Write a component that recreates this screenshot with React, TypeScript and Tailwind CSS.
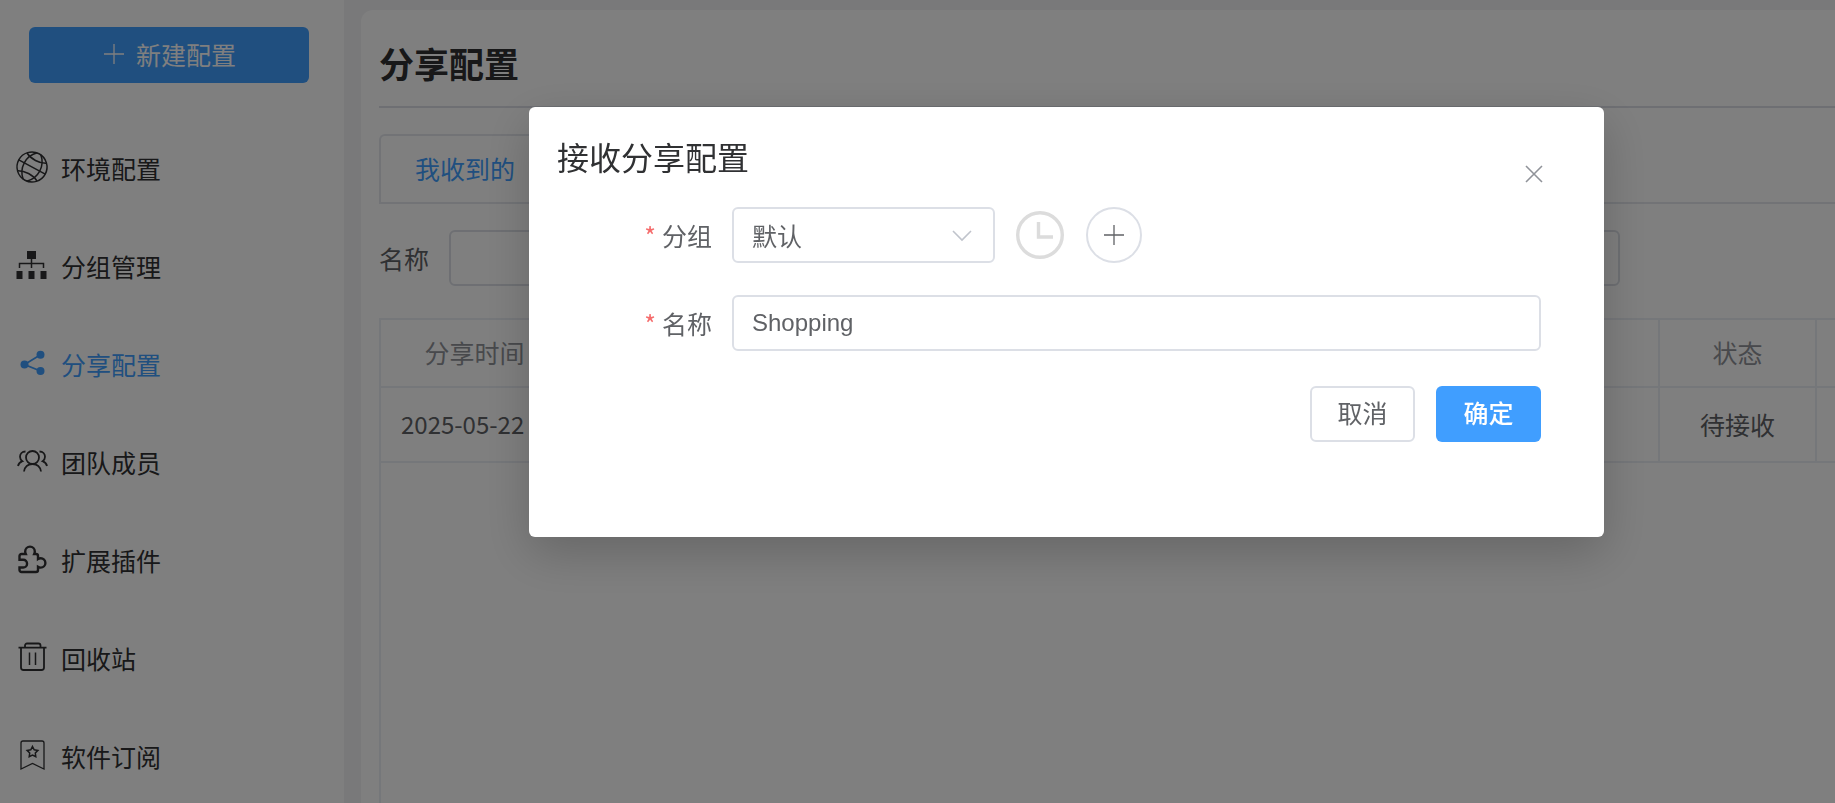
import type { ReactNode } from 'react';

interface MenuItem {
    label: string;
    icon: ReactNode;
    active?: boolean;
}

const menuItems: MenuItem[] = [
    {
        label: '环境配置',
        icon: (
            <g transform="rotate(28 16 15)" strokeWidth="1.5">
                <circle cx="16" cy="15" r="15" />
                <path d="M1 15h30M5 5c6 3.500 16 3.500 22 0M5 25c6-3.500 16-3.500 22 0" />
                <path d="M14 0c-9 8-9 22 0 30M18 0c9 8 9 22 0 30" />
            </g>
        ),
    },
    {
        label: '分组管理',
        icon: (
            <>
                <path d="M11 1h9v8h-9zM.5 21h6v8h-6zM12.500 21h6v8h-6zM24.500 21h6v8h-6z" fill="currentColor" stroke="none" />
                <path d="M15.500 9v9M3.500 18v-4.500h24V18" strokeWidth="1.5" />
            </>
        ),
    },
    {
        label: '分享配置',
        active: true,
        icon: (
            <>
                <path d="M24.500 6.700l-16 9.800 16 6.500" />
                <g fill="currentColor" stroke="none">
                    <circle cx="8.500" cy="16.500" r="4" />
                    <circle cx="24.500" cy="6.700" r="4" />
                    <circle cx="24.500" cy="23" r="4" />
                </g>
            </>
        ),
    },
    {
        label: '团队成员',
        icon: (
            <>
                <circle cx="16.500" cy="11.500" r="6.500" />
                <path d="M8 25.500c.6-4.600 4-7.500 8.500-7.500s7.900 2.900 8.500 7.500" />
                <path d="M9.500 5.500C6 5.500 4 8 4 10.800c0 1.900.9 3.400 2.400 4.400C4 16.200 2.400 18 2 20" />
                <path d="M23.500 5.500c3.500 0 5.500 2.500 5.500 5.300 0 1.900-.9 3.400-2.400 4.400 2.400 1 4 2.800 4.400 4.800" />
            </>
        ),
    },
    {
        label: '扩展插件',
        icon: (
            <path
                strokeWidth="2.4"
                d="M3.500 15.800V12a2 2 0 0 1 2-2h4.300c-.4-.9-.6-1.700-.6-2.600a4.800 4.800 0 0 1 9.600 0c0 .9-.2 1.700-.6 2.600H20a2 2 0 0 1 2 2v3c.8-.5 1.700-.8 2.700-.8a4.700 4.700 0 0 1 0 9.400c-1 0-1.900-.3-2.700-.8V26a2 2 0 0 1-2 2H5.500a2 2 0 0 1-2-2v-2.500h3.700a3.850 3.850 0 0 0 0-7.700z"
            />
        ),
    },
    {
        label: '回收站',
        icon: (
            <>
                <path d="M2.500 5.700h28M9 5.500V3.500a2 2 0 0 1 2-2h11.500a2 2 0 0 1 2 2v2M5 6v19.500a2.500 2.500 0 0 0 2.500 2.500h18a2.500 2.500 0 0 0 2.500-2.500V6" />
                <path d="M13.500 10.500v12.500M19.500 10.500v12.500" strokeWidth="1.5" />
            </>
        ),
    },
    {
        label: '软件订阅',
        icon: (
            <>
                <path strokeWidth="1.3" d="M5 29V3a2 2 0 0 1 2-2h19a2 2 0 0 1 2 2v26l-11.500-5.500z" />
                <path
                    strokeWidth="1.5"
                    d="M16.500 6.500l1.700 3.300 3.700.6-2.600 2.600.5 3.700-3.300-1.600-3.300 1.600.5-3.700-2.600-2.600 3.700-.6z"
                />
            </>
        ),
    },
];

function MenuIcon({ children }: { children: ReactNode }) {
    return (
        <svg viewBox="0 0 32 32" className="size-8 shrink-0 overflow-visible" fill="none" stroke="currentColor" strokeWidth="1.8">
            {children}
        </svg>
    );
}

function PlusIcon() {
    return (
        <svg viewBox="0 0 20 20" className="size-5" fill="none" stroke="currentColor" strokeWidth="1.3" aria-hidden="true">
            <path d="M10 0v20M0 10h20" />
        </svg>
    );
}

function Sidebar() {
    return (
        <aside className="w-[344px] shrink-0 bg-white pt-[27px]">
            <div className="pr-[35px] pl-[29px]">
                <button className="flex h-14 w-full items-center justify-center gap-3 rounded-md bg-[#409eff] pb-0.5 pl-0.5 text-white">
                    <PlusIcon />
                    新建配置
                </button>
            </div>
            <nav className="mt-9">
                {menuItems.map((item) => (
                    <a
                        key={item.label}
                        href="#"
                        className={`flex h-[98px] items-center gap-[13px] pl-4 ${item.active ? 'text-[#409eff]' : 'text-[#303133]'}`}
                    >
                        <MenuIcon>{item.icon}</MenuIcon>
                        {item.label}
                    </a>
                ))}
            </nav>
        </aside>
    );
}

function ShareTable() {
    return (
        <div className="mt-8 flex-1 border-t-2 border-l-2 border-[#ebeef5]">
            <table className="w-full table-fixed border-collapse text-center">
                <thead className="text-[#909399]">
                    <tr className="h-[67px] border-b-2 border-[#ebeef5]">
                        <th className="w-[188px] border-r-2 border-[#ebeef5] pb-0.5 font-normal">分享时间</th>
                        <th className="border-r-2 border-[#ebeef5]"></th>
                        <th className="w-[157px] border-r-2 border-[#ebeef5] pb-0.5 font-normal">状态</th>
                        <th className="w-[19px]"></th>
                    </tr>
                </thead>
                <tbody className="text-[#606266]">
                    <tr className="h-[75px] border-b-2 border-[#ebeef5]">
                        <td className="overflow-hidden border-r-2 border-[#ebeef5] pb-0.5 pl-5 text-left text-[24px] whitespace-nowrap">
                            2025-05-22
                        </td>
                        <td className="border-r-2 border-[#ebeef5]"></td>
                        <td className="border-r-2 border-[#ebeef5] pb-0.5">待接收</td>
                        <td></td>
                    </tr>
                </tbody>
            </table>
        </div>
    );
}

function SharePage() {
    return (
        <main className="flex min-w-0 flex-1 flex-col pt-[10px] pl-[17px]">
            <section className="flex flex-1 flex-col rounded-tl-xl bg-white pl-[18px]">
                <h1 className="flex h-[98px] items-center border-b-2 border-[#dcdfe6] pt-[10px] text-[35px] font-bold text-[#303133]">
                    分享配置
                </h1>
                <div className="mt-[26px] border-b-2 border-[#e4e7ed]">
                    <div className="flex h-[68px] w-[400px] items-center rounded-t-md border-t-2 border-l-2 border-[#e4e7ed] pb-0.5 pl-[34px]">
                        <button className="text-[#409eff]">我收到的</button>
                    </div>
                </div>
                <div className="mt-[26px] flex items-center gap-5 pr-[215px] text-[#606266]">
                    <label htmlFor="search-name">名称</label>
                    <input id="search-name" className="h-14 min-w-0 flex-1 rounded-md border-2 border-[#dcdfe6] px-5" />
                </div>
                <ShareTable />
            </section>
        </main>
    );
}

function FieldLabel({ htmlFor, children }: { htmlFor: string; children: ReactNode }) {
    return (
        <label htmlFor={htmlFor} className="flex w-[203px] shrink-0 justify-end gap-1.5 pr-5">
            <span className="text-[#f56c6c]">*</span>
            {children}
        </label>
    );
}

function ReceiveDialog() {
    return (
        <div className="fixed inset-0 bg-black/50 pt-[107px] pr-[231px] pl-[529px]">
            <div role="dialog" aria-labelledby="dialog-title" className="h-[430px] rounded-md bg-white pr-[63px] shadow-[0_16px_48px_rgba(0,0,0,0.2)]">
                <header className="flex h-[100px] justify-between pl-7">
                    <h2 id="dialog-title" className="pt-[26px] text-[32px] leading-[46px] text-[#303133]">
                        接收分享配置
                    </h2>
                    <button aria-label="关闭" className="mt-[50px] size-[34px] text-[#909399]">
                        <svg viewBox="0 0 34 34" className="overflow-visible" fill="none" stroke="currentColor" strokeWidth="1.6">
                            <path d="M19 9l16 16M35 9l-16 16" />
                        </svg>
                    </button>
                </header>
                <form className="text-[#606266]">
                    <div className="flex items-center">
                        <FieldLabel htmlFor="group">分组</FieldLabel>
                        <div className="relative w-[263px]">
                            <select id="group" className="h-14 w-full appearance-none rounded-md border-2 border-[#dcdfe6] bg-white px-[18px]">
                                <option>默认</option>
                            </select>
                            <svg
                                viewBox="0 0 20 12"
                                className="pointer-events-none absolute top-[23px] right-[23px] h-3 w-5"
                                fill="none"
                                stroke="#c0c4cc"
                                strokeWidth="1.6"
                            >
                                <path d="M1 1l9 9 9-9" />
                            </svg>
                        </div>
                        <button type="button" aria-label="历史" className="ml-[21px]">
                            <svg viewBox="0 0 48 48" className="size-12" fill="none" stroke="#dcdcdc" strokeWidth="3.4">
                                <circle cx="24" cy="24" r="22.3" />
                                <path d="M22.500 11v15h14.500" />
                            </svg>
                        </button>
                        <button
                            type="button"
                            aria-label="新增分组"
                            className="ml-[22px] flex size-14 items-center justify-center rounded-full border-2 border-[#dcdfe6]"
                        >
                            <PlusIcon />
                        </button>
                    </div>
                    <div className="mt-8 flex items-center">
                        <FieldLabel htmlFor="name">名称</FieldLabel>
                        <input
                            id="name"
                            defaultValue="Shopping"
                            className="h-14 min-w-0 flex-1 rounded-md border-2 border-[#dcdfe6] px-[18px] font-['Liberation_Sans','Noto_Sans_CJK_SC',sans-serif] text-[24px]"
                        />
                    </div>
                    <div className="mt-[35px] flex justify-end gap-[21px]">
                        <button type="button" className="h-14 w-[105px] rounded-md border-2 border-[#dcdfe6] pb-1">
                            取消
                        </button>
                        <button type="button" className="h-14 w-[105px] rounded-md bg-[#409eff] pb-1 font-medium text-white">
                            确定
                        </button>
                    </div>
                </form>
            </div>
        </div>
    );
}

export default function App() {
    return (
        <div className="flex h-screen overflow-hidden bg-[#f3f3f5] font-['Noto_Sans_CJK_SC',sans-serif] text-[25px] leading-9">
            <Sidebar />
            <SharePage />
            <ReceiveDialog />
        </div>
    );
}
